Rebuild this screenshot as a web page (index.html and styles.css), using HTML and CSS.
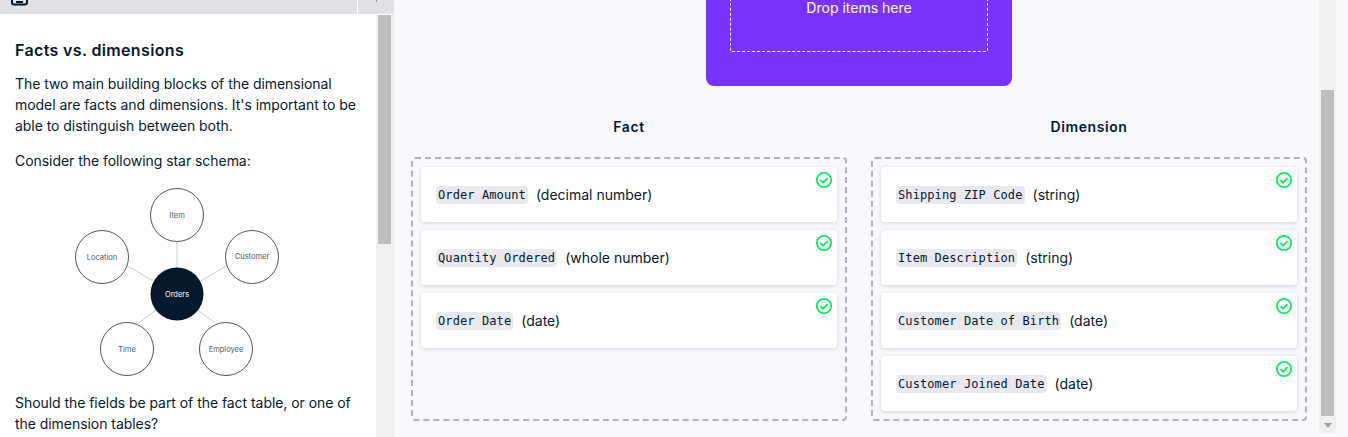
FILE: index.html
```html
<!DOCTYPE html>
<html lang="en">
<head>
<meta charset="UTF-8">
<meta name="viewport" content="width=device-width, initial-scale=1.0">
<title>Facts vs. dimensions</title>
<link rel="stylesheet" href="styles.css">
</head>
<body>
<div class="app">
    <aside class="side">
        <div class="tabs">
            <div class="tab-main">
                <svg class="tab-icon" width="18" height="14" viewBox="0 0 18 14"><path d="M1 -3v5.500a2 2 0 0 0 2 2h11a2 2 0 0 0 2 -2v-5.500M5 2h7" fill="none" stroke="#05192d" stroke-width="2"/></svg>
            </div>
            <div class="tab-end"><span class="tab-mark"></span></div>
        </div>
        <div class="side-body">
            <div class="lesson">
                <h2>Facts vs. dimensions</h2>
                <p>The two main building blocks of the dimensional model are facts and dimensions. It's important to be able to distinguish between both.</p>
                <p class="before-schema">Consider the following star schema:</p>
                <svg class="schema" width="210" height="196" viewBox="0 0 210 196">
                    <g stroke="#c9cacc" stroke-width="1" fill="none">
                        <line x1="105" y1="59" x2="105" y2="114"/>
                        <line x1="54" y1="84" x2="88" y2="104"/>
                        <line x1="156" y1="84" x2="122" y2="104"/>
                        <line x1="67" y1="142" x2="88" y2="126"/>
                        <line x1="143" y1="142" x2="122" y2="126"/>
                    </g>
                    <g fill="#fff" stroke="#4a5666" stroke-width="1">
                        <circle cx="105" cy="34" r="26.500"/>
                        <circle cx="30" cy="76" r="26.500"/>
                        <circle cx="180" cy="76" r="26.500"/>
                        <circle cx="55" cy="168" r="26.500"/>
                        <circle cx="154" cy="168" r="26.500"/>
                    </g>
                    <circle cx="105" cy="113" r="26.500" fill="#05192d"/>
                    <g class="schema-text" text-anchor="middle">
                        <text x="105" y="37">Item</text>
                        <text x="30" y="79">Location</text>
                        <text x="180" y="78">Customer</text>
                        <text x="55" y="171">Time</text>
                        <text x="154" y="171">Employee</text>
                        <text class="schema-dark" x="105" y="116">Orders</text>
                    </g>
                </svg>
                <p>Should the fields be part of the fact table, or one of the dimension tables?</p>
            </div>
            <div class="scrollbar side-scroll"><div class="thumb"></div></div>
        </div>
    </aside>

    <main class="main">
        <div class="content">
            <div class="source">
                <div class="drop">Drop items here</div>
            </div>
            <div class="columns">
                <section class="col">
                    <h3>Fact</h3>
                    <div class="bucket">
                        <div class="item"><code>Order Amount</code> (decimal number)
                            <svg class="ok" width="18" height="18" viewBox="0 0 18 18"><circle cx="9" cy="9" r="7.200"/><path d="M5.500 9.200l2.500 2.500 4.500 -4.500"/></svg>
                        </div>
                        <div class="item"><code>Quantity Ordered</code> (whole number)
                            <svg class="ok" width="18" height="18" viewBox="0 0 18 18"><circle cx="9" cy="9" r="7.200"/><path d="M5.500 9.200l2.500 2.500 4.500 -4.500"/></svg>
                        </div>
                        <div class="item"><code>Order Date</code> (date)
                            <svg class="ok" width="18" height="18" viewBox="0 0 18 18"><circle cx="9" cy="9" r="7.200"/><path d="M5.500 9.200l2.500 2.500 4.500 -4.500"/></svg>
                        </div>
                    </div>
                </section>
                <section class="col">
                    <h3>Dimension</h3>
                    <div class="bucket">
                        <div class="item"><code>Shipping ZIP Code</code> (string)
                            <svg class="ok" width="18" height="18" viewBox="0 0 18 18"><circle cx="9" cy="9" r="7.200"/><path d="M5.500 9.200l2.500 2.500 4.500 -4.500"/></svg>
                        </div>
                        <div class="item"><code>Item Description</code> (string)
                            <svg class="ok" width="18" height="18" viewBox="0 0 18 18"><circle cx="9" cy="9" r="7.200"/><path d="M5.500 9.200l2.500 2.500 4.500 -4.500"/></svg>
                        </div>
                        <div class="item"><code>Customer Date of Birth</code> (date)
                            <svg class="ok" width="18" height="18" viewBox="0 0 18 18"><circle cx="9" cy="9" r="7.200"/><path d="M5.500 9.200l2.500 2.500 4.500 -4.500"/></svg>
                        </div>
                        <div class="item"><code>Customer Joined Date</code> (date)
                            <svg class="ok" width="18" height="18" viewBox="0 0 18 18"><circle cx="9" cy="9" r="7.200"/><path d="M5.500 9.200l2.500 2.500 4.500 -4.500"/></svg>
                        </div>
                    </div>
                </section>
            </div>
        </div>
        <div class="scrollbar main-scroll">
            <div class="thumb"></div>
            <svg class="arrow" width="8" height="5" viewBox="0 0 8 5"><path d="M0 0h8l-4 5z" fill="#a3a3a3"/></svg>
        </div>
    </main>
</div>
</body>
</html>
```

FILE: styles.css
```css
html, body {
    margin: 0;
    padding: 0;
    height: 100%;
    overflow: hidden;
}
body {
    font-family: Inter, "Noto Sans", sans-serif;
    font-size: 14px;
    color: #05192d;
    background-color: #f7f7fc;
}
.app {
    display: flex;
    height: 437px;
}

/* left panel */
.side {
    width: 393px;
    flex: none;
    display: flex;
    flex-direction: column;
    border-right: 1px solid #e8e8ee;
    background-color: #fff;
}
.tabs {
    display: flex;
    height: 14px;
    flex: none;
}
.tab-main {
    width: 357px;
    background-color: #e0e1e6;
    overflow: hidden;
}
.tab-icon {
    display: block;
    margin-left: 11px;
}
.tab-end {
    flex: 1;
    margin-left: 1px;
    padding-left: 18px;
    background-color: #e0e1e6;
}
.tab-mark {
    display: block;
    width: 1px;
    height: 2px;
    background-color: #8f929e;
}
.side-body {
    flex: 1;
    display: flex;
    min-height: 0;
    margin-top: 1px;
}
.lesson {
    flex: 1;
    padding: 25px 15px 0;
    overflow: hidden;
}
.lesson h2 {
    margin: 0 0 13px;
    font-size: 16px;
    line-height: 20px;
    font-weight: 600;
    letter-spacing: 0.35px;
}
.lesson p {
    margin: 0 0 14px;
    line-height: 21px;
    letter-spacing: -0.05px;
}
.lesson .before-schema {
    margin-bottom: 10px;
}
.schema {
    display: block;
    margin: 0 0 15px 57px;
}
.schema-text {
    font-size: 7.500px;
    fill: #4a5666;
}
.schema-text .schema-dark {
    fill: #fff;
}
.scrollbar {
    width: 17px;
    flex: none;
    background-color: #f0f0f0;
}
.side-scroll .thumb {
    margin: 0 2px;
    height: 229px;
    background-color: #bebebe;
}

/* right panel */
.main {
    flex: 1;
    display: flex;
    min-width: 0;
}
.content {
    width: 925px;
    flex: none;
    padding: 0 12px 0 17px;
    box-sizing: border-box;
    overflow: hidden;
}
.source {
    width: 306px;
    height: 86px;
    margin: 0 auto;
    padding: 0 24px;
    box-sizing: border-box;
    background-color: #7933ff;
    border-radius: 0 0 8px 8px;
}
.drop {
    height: 52px;
    box-sizing: border-box;
    border: 1px dashed #fff;
    border-top: none;
    border-radius: 0 0 2px 2px;
    color: #fff;
    text-align: center;
    line-height: 16px;
    font-size: 14px;
}
.columns {
    display: flex;
    gap: 24px;
    margin-top: 30px;
}
.col {
    flex: 1;
    min-width: 0;
}
.col h3 {
    margin: 0 0 20px;
    font-size: 14px;
    line-height: 21px;
    font-weight: 600;
    text-align: center;
    letter-spacing: 0.6px;
}
.bucket {
    height: 264px;
    box-sizing: border-box;
    padding: 8px;
    border: 2px dashed #b1b2bb;
    border-radius: 4px;
}
.item {
    position: relative;
    height: 55px;
    margin-bottom: 8px;
    padding-left: 15px;
    display: flex;
    align-items: center;
    gap: 8px;
    background-color: #fff;
    border-radius: 4px;
    box-shadow: 0 1px 4px rgba(5, 25, 45, 0.15);
    white-space: nowrap;
}
.item code {
    font-family: "DejaVu Sans Mono", "Liberation Mono", monospace;
    font-size: 12px;
    line-height: 18px;
    letter-spacing: 0.1px;
    padding: 0 2px;
    background-color: #e8e8ee;
    border-radius: 4px;
}
.ok {
    position: absolute;
    top: 4px;
    right: 4px;
    fill: none;
    stroke: #03ef62;
    stroke-width: 1.800;
}
.main-scroll {
    position: relative;
    height: 433px;
}
.main-scroll .thumb {
    position: absolute;
    top: 90px;
    left: 2px;
    right: 2px;
    height: 326px;
    background-color: #bebebe;
}
.arrow {
    position: absolute;
    left: 5px;
    top: 423px;
}
```
